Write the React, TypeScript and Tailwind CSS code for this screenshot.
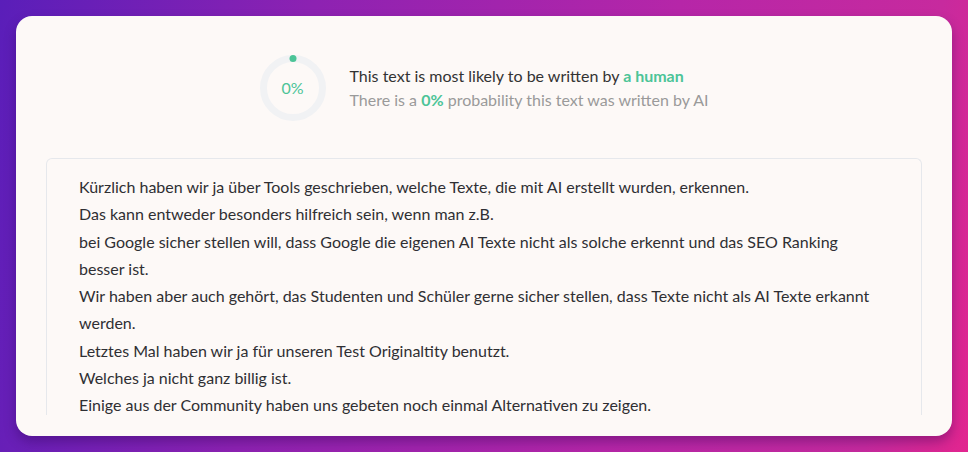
const lines = [
  'Kürzlich haben wir ja über Tools geschrieben, welche Texte, die mit AI erstellt wurden, erkennen.',
  'Das kann entweder besonders hilfreich sein, wenn man z.B.',
  'bei Google sicher stellen will, dass Google die eigenen AI Texte nicht als solche erkennt und das SEO Ranking besser ist.',
  'Wir haben aber auch gehört, das Studenten und Schüler gerne sicher stellen, dass Texte nicht als AI Texte erkannt werden.',
  'Letztes Mal haben wir ja für unseren Test Originaltity benutzt.',
  'Welches ja nicht ganz billig ist.',
  'Einige aus der Community haben uns gebeten noch einmal Alternativen zu zeigen.',
];

function ScoreRing() {
  return (
    <div className="relative w-[66px] h-[66px] shrink-0">
      <svg width="66" height="66" viewBox="0 0 66 66" className="absolute inset-0">
        <circle cx="33" cy="33" r="29.5" stroke="#f1f2f4" strokeWidth="7" fill="none" />
        <circle cx="33" cy="3.5" r="3.5" fill="#4cc497" />
      </svg>
      <div className="absolute inset-0 flex items-center justify-center text-[16px] text-[#4cc497]">0%</div>
    </div>
  );
}

export default function App() {
  return (
    <div
      className="w-[968px] h-[452px] p-4 bg-[linear-gradient(100deg,#5a1eb9_0%,#8d22b2_30%,#b626a8_65%,#c72a9e_90%,#e2258f_100%)] font-['Lato','Open_Sans',sans-serif] overflow-hidden"
    >
      <div className="h-[420px] rounded-2xl bg-[#fdf9f7] shadow-[0_6px_12px_rgba(40,0,80,0.35)] px-[30px] pt-[39px] overflow-hidden">
        <div className="flex items-center justify-center gap-6">
          <ScoreRing />
          <div className="flex flex-col">
            <div className="text-[16px] leading-6 text-[#333]">
              This text is most likely to be written by <span className="font-bold text-[#4cc497]">a human</span>
            </div>
            <div className="text-[16px] leading-6 text-[#9a9a9a]">
              There is a <span className="font-bold text-[#4cc497]">0%</span> probability this text was written by AI
            </div>
          </div>
        </div>
        <div className="mt-[37px] h-[257px] overflow-hidden rounded-t-md border border-b-0 border-[#e6e8ec] pl-8 pr-[35px] pt-[14px]">
          {lines.map((l) => (
            <p key={l} className="text-[16px] leading-[27.3px] text-[#2f2f33]">{l}</p>
          ))}
        </div>
      </div>
    </div>
  );
}
